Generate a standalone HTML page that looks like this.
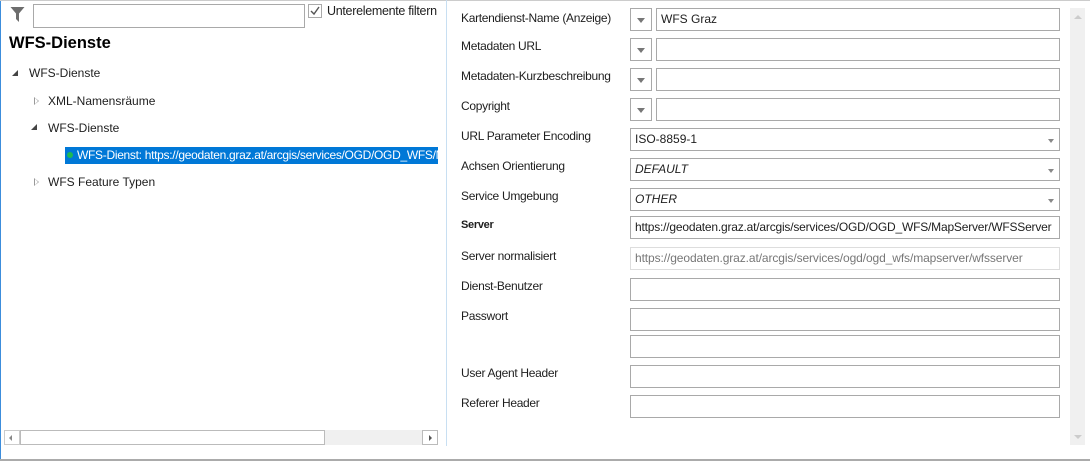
<!DOCTYPE html>
<html><head><meta charset="utf-8"><style>
*{box-sizing:border-box;margin:0;padding:0}
body{width:1090px;height:461px;background:#fff;font-family:"Liberation Sans",sans-serif;font-size:12px;color:#1e1e1e;position:relative;overflow:hidden}
.a{position:absolute}
.box{position:absolute;border:1px solid #a9a9a9;background:#fff;height:23px;padding:3px 4px 0;white-space:nowrap;overflow:hidden}
.lbl{position:absolute;left:461px;font-size:12px;letter-spacing:-0.3px}
.dd{position:absolute;left:630px;width:22px;height:23px;border:1px solid #a9a9a9;background:#fff}
.dd:after{content:"";position:absolute;left:6px;top:9px;border-left:4px solid transparent;border-right:4px solid transparent;border-top:5px solid #777}
.arr{position:absolute;right:5px;top:10px;border-left:3px solid transparent;border-right:3px solid transparent;border-top:4px solid #888}
.tri{position:absolute;width:0;height:0}
</style></head><body>
<div class="a" style="left:0;top:0;width:1px;height:461px;background:#3c8ddc"></div>
<div class="a" style="left:0;top:0;width:1090px;height:1px;background:#ccc"></div>
<div class="a" style="left:0;top:459px;width:1090px;height:2px;background:#ababab"></div>
<div class="a" style="left:446px;top:0;width:1px;height:446px;background:#c8dff2"></div>

<svg class="a" style="left:10px;top:6px" width="15" height="17" viewBox="0 0 15 17"><path d="M0.5 1h14L9 7.5V16L6 13V7.5Z" fill="#6d6d6d"/></svg>
<div class="box" style="left:33px;top:4px;width:272px;height:24px"></div>
<div class="a" style="left:308px;top:4px;width:14px;height:14px;border:1px solid #aaa;background:#fff"></div>
<svg class="a" style="left:310px;top:6px" width="10" height="10"><path d="M1 5l3 3 5-7" fill="none" stroke="#555" stroke-width="1.4"/></svg>
<div class="a" style="left:327px;top:4px;font-size:12.5px;letter-spacing:-0.3px">Unterelemente filtern</div>
<div class="a" style="left:9px;top:34px;font-size:16.5px;font-weight:bold;color:#000">WFS-Dienste</div>

<div class="tri a" style="left:12px;top:70px;border-left:6px solid transparent;border-bottom:6px solid #444"></div>
<div class="a" style="left:29px;top:66px">WFS-Dienste</div>
<div class="tri a" style="left:34px;top:97px;border-top:4px solid transparent;border-bottom:4px solid transparent;border-left:5px solid #999"></div>
<div class="tri a" style="left:35px;top:98px;border-top:3px solid transparent;border-bottom:3px solid transparent;border-left:3px solid #fff"></div>
<div class="a" style="left:48px;top:94px">XML-Namensräume</div>
<div class="tri a" style="left:31px;top:124px;border-left:6px solid transparent;border-bottom:6px solid #444"></div>
<div class="a" style="left:48px;top:121px">WFS-Dienste</div>
<div class="a" style="left:65px;top:147px;width:373px;height:17px;background:#0078d7;color:#fff;padding:1px 0 0 12px;white-space:nowrap;overflow:hidden;letter-spacing:-0.3px">WFS-Dienst: https://geodaten.graz.at/arcgis/services/OGD/OGD_WFS/MapServer</div>
<div class="a" style="left:67px;top:152px;width:6px;height:6px;border-radius:50%;background:#1db954"></div>
<div class="tri a" style="left:34px;top:178px;border-top:4px solid transparent;border-bottom:4px solid transparent;border-left:5px solid #999"></div>
<div class="tri a" style="left:35px;top:179px;border-top:3px solid transparent;border-bottom:3px solid transparent;border-left:3px solid #fff"></div>
<div class="a" style="left:48px;top:175px">WFS Feature Typen</div>

<div class="a" style="left:4px;top:430px;width:434px;height:15px;background:#f0f0f0"></div>
<div class="a" style="left:4px;top:430px;width:16px;height:15px;border:1px solid #ccc;background:#fff"></div>
<div class="a" style="left:20px;top:430px;width:305px;height:15px;border:1px solid #bbb;background:#fff"></div>
<div class="a" style="left:422px;top:430px;width:16px;height:15px;border:1px solid #bbb;background:#fff"></div>
<div class="tri a" style="left:9px;top:435px;border-top:3px solid transparent;border-bottom:3px solid transparent;border-right:3px solid #888"></div>
<div class="tri a" style="left:429px;top:435px;border-top:3px solid transparent;border-bottom:3px solid transparent;border-left:3px solid #555"></div>

<div class="a" style="left:1070px;top:8px;width:15px;height:437px;background:#f0f0f0"></div>
<div class="tri a" style="left:1074px;top:15px;border-left:4px solid transparent;border-right:4px solid transparent;border-bottom:4px solid #ccc"></div>
<div class="tri a" style="left:1074px;top:435px;border-left:4px solid transparent;border-right:4px solid transparent;border-top:4px solid #ccc"></div>

<div class="lbl" style="top:11px">Kartendienst-Name (Anzeige)</div>
<div class="dd" style="top:8px"></div><div class="box" style="left:656px;top:8px;width:404px">WFS Graz</div>
<div class="lbl" style="top:39px">Metadaten URL</div>
<div class="dd" style="top:38px"></div><div class="box" style="left:656px;top:38px;width:404px"></div>
<div class="lbl" style="top:69px">Metadaten-Kurzbeschreibung</div>
<div class="dd" style="top:68px"></div><div class="box" style="left:656px;top:68px;width:404px"></div>
<div class="lbl" style="top:99px">Copyright</div>
<div class="dd" style="top:98px"></div><div class="box" style="left:656px;top:98px;width:404px"></div>
<div class="lbl" style="top:129px">URL Parameter Encoding</div>
<div class="box" style="left:630px;top:128px;width:430px">ISO-8859-1<span class="arr"></span></div>
<div class="lbl" style="top:159px">Achsen Orientierung</div>
<div class="box" style="left:630px;top:158px;width:430px;font-style:italic">DEFAULT<span class="arr"></span></div>
<div class="lbl" style="top:189px">Service Umgebung</div>
<div class="box" style="left:630px;top:188px;width:430px;font-style:italic">OTHER<span class="arr"></span></div>
<div class="lbl" style="top:219px;font-weight:bold;font-size:11px">Server</div>
<div class="box" style="left:630px;top:216px;width:430px;letter-spacing:-0.2px">https://geodaten.graz.at/arcgis/services/OGD/OGD_WFS/MapServer/WFSServer</div>
<div class="lbl" style="top:249px">Server normalisiert</div>
<div class="box" style="left:630px;top:247px;width:430px;border-color:#ddd;color:#777;letter-spacing:-0.1px">https://geodaten.graz.at/arcgis/services/ogd/ogd_wfs/mapserver/wfsserver</div>
<div class="lbl" style="top:279px">Dienst-Benutzer</div>
<div class="box" style="left:630px;top:278px;width:430px"></div>
<div class="lbl" style="top:309px">Passwort</div>
<div class="box" style="left:630px;top:308px;width:430px"></div>
<div class="box" style="left:630px;top:335px;width:430px"></div>
<div class="lbl" style="top:366px">User Agent Header</div>
<div class="box" style="left:630px;top:365px;width:430px"></div>
<div class="lbl" style="top:396px">Referer Header</div>
<div class="box" style="left:630px;top:395px;width:430px"></div>
</body></html>
